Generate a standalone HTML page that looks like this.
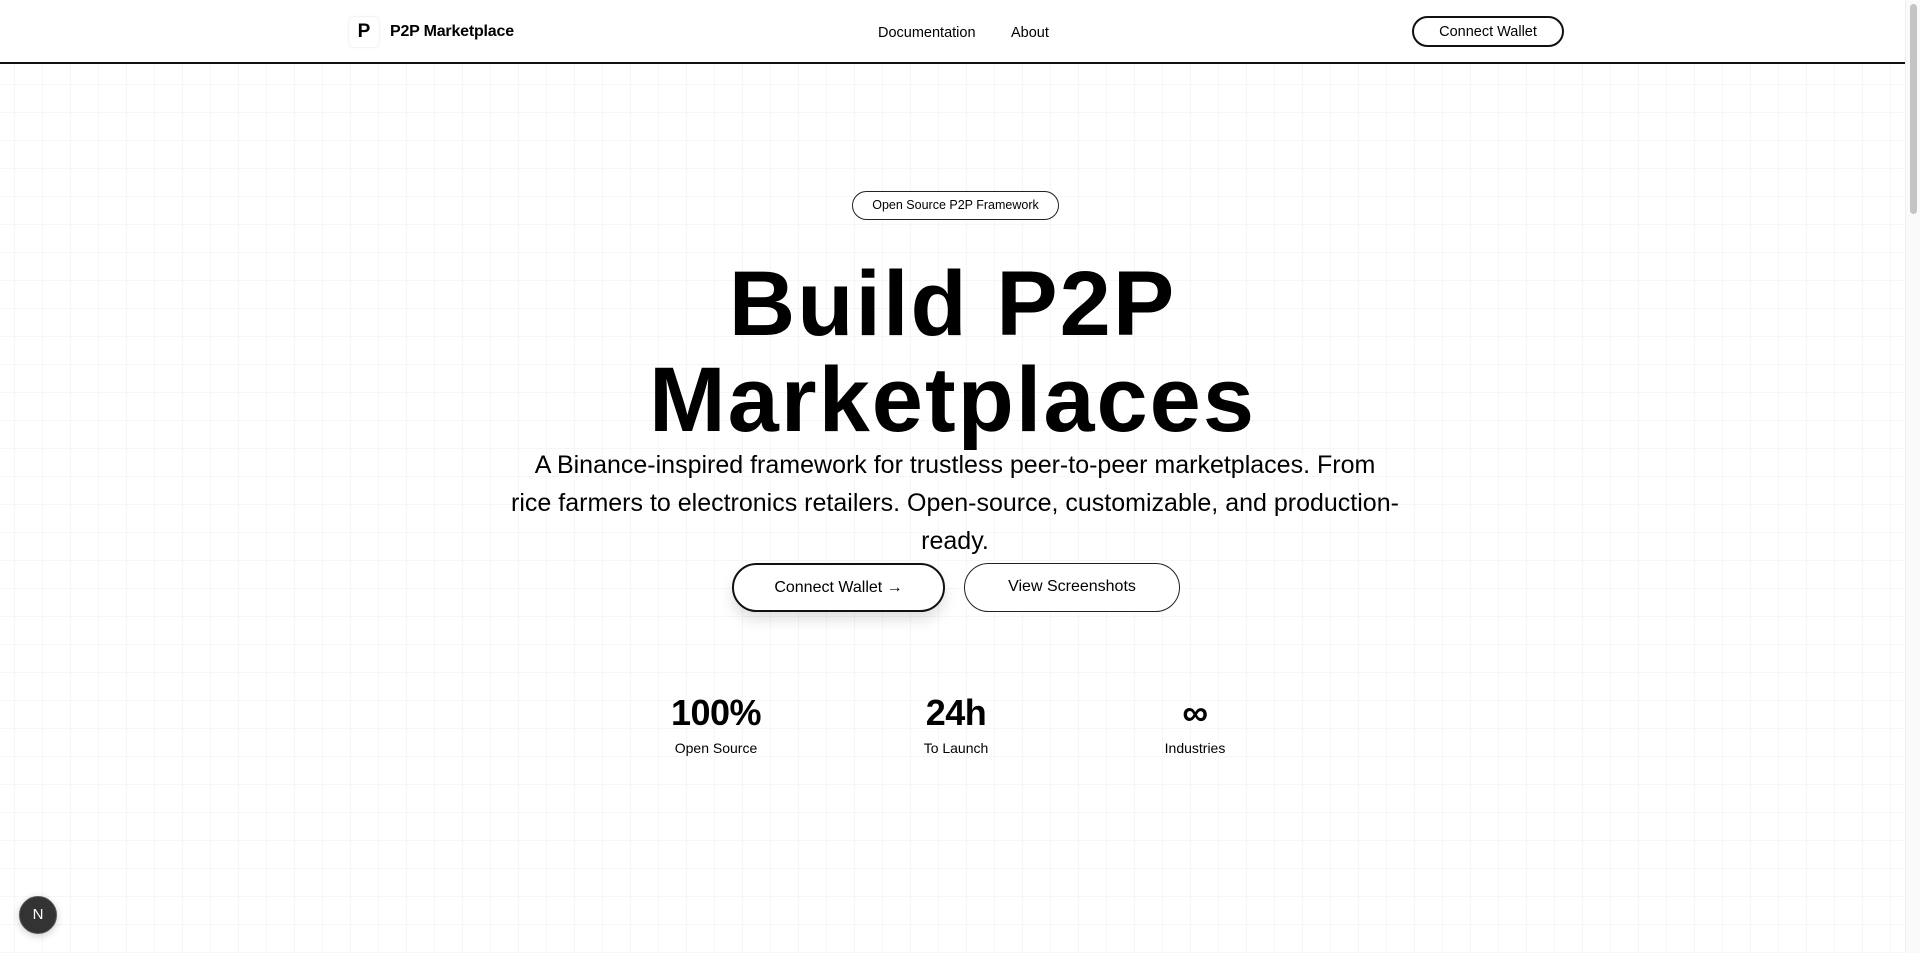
<!DOCTYPE html>
<html><head><meta charset="utf-8"><style>
*{box-sizing:border-box;margin:0;padding:0}
html,body{width:1920px;height:953px;overflow:hidden}
body{font-family:"Liberation Sans",sans-serif;color:#000;background-color:#fff;
background-image:linear-gradient(#f6f6f6 1px,transparent 1px),linear-gradient(90deg,#f6f6f6 1px,transparent 1px);background-size:28px 28px;background-position:14px 0;position:relative}
header{position:absolute;left:0;top:0;width:1905px;height:64px;background:#fff;border-bottom:2px solid #111}
.logo{position:absolute;left:349px;top:17px;width:30px;height:30px;border-radius:6px;background:#fff;box-shadow:0 0 2px rgba(0,0,0,.15);font-weight:bold;font-size:19px;text-align:center;line-height:30px}
.brand{position:absolute;left:390px;top:23px;font-size:16px;font-weight:bold;letter-spacing:-.2px}
.nav{position:absolute;top:25px;font-size:14.5px}
.hbtn{position:absolute;left:1412px;top:16px;width:152px;height:31px;border:2px solid #111;border-radius:16px;font-size:14.5px;text-align:center;line-height:28px}
.scroll{position:absolute;right:0;top:0;width:15px;height:953px;background:#fafafa;border-left:1px solid #eee}
.scroll div{position:absolute;left:4px;top:4px;width:7px;height:210px;border-radius:4px;background:#c4c4c4}
.badge{position:absolute;left:852px;top:191px;width:207px;height:29px;border:1.5px solid #222;border-radius:15px;background:#fff;font-size:12.5px;text-align:center;line-height:27px}
h1{position:absolute;left:0;width:1905px;top:256px;text-align:center;font-size:92px;line-height:96px;font-weight:bold;letter-spacing:2px}
p{position:absolute;left:0;width:1910px;top:446px;text-align:center;font-size:25px;line-height:38px;white-space:nowrap}
.b1,.b2{position:absolute;top:563px;height:49px;border-radius:25px;font-size:16px;text-align:center;line-height:46px;background:#fff}
.b1{left:732px;width:213px;border:2px solid #111;box-shadow:0 8px 14px rgba(0,0,0,.12)}
.b2{left:964px;width:216px;border:1.5px solid #222}
.stat{position:absolute;top:691px;width:200px;text-align:center}
.stat b{display:block;font-size:36px;line-height:44px;letter-spacing:-.5px}
.stat span{display:block;font-size:14px;margin-top:5px}
.n{position:absolute;left:19px;top:896px;width:38px;height:38px;border-radius:50%;background:#333;border:1.5px solid #555;color:#fff;font-size:15px;text-align:center;line-height:35px;box-shadow:0 2px 8px rgba(0,0,0,.2)}
</style></head><body>
<header>
<div class="logo">P</div><div class="brand">P2P Marketplace</div>
<div class="nav" style="left:878px">Documentation</div>
<div class="nav" style="left:1011px">About</div>
<div class="hbtn">Connect Wallet</div>
</header>
<div class="scroll"><div></div></div>
<div class="badge">Open Source P2P Framework</div>
<h1>Build P2P<br>Marketplaces</h1>
<p>A Binance-inspired framework for trustless peer-to-peer marketplaces. From<br>rice farmers to electronics retailers. Open-source, customizable, and production-<br>ready.</p>
<div class="b1">Connect Wallet →</div>
<div class="b2">View Screenshots</div>
<div class="stat" style="left:616px"><b>100%</b><span>Open Source</span></div>
<div class="stat" style="left:856px"><b>24h</b><span>To Launch</span></div>
<div class="stat" style="left:1095px"><b>∞</b><span>Industries</span></div>
<div class="n">N</div>
</body></html>
